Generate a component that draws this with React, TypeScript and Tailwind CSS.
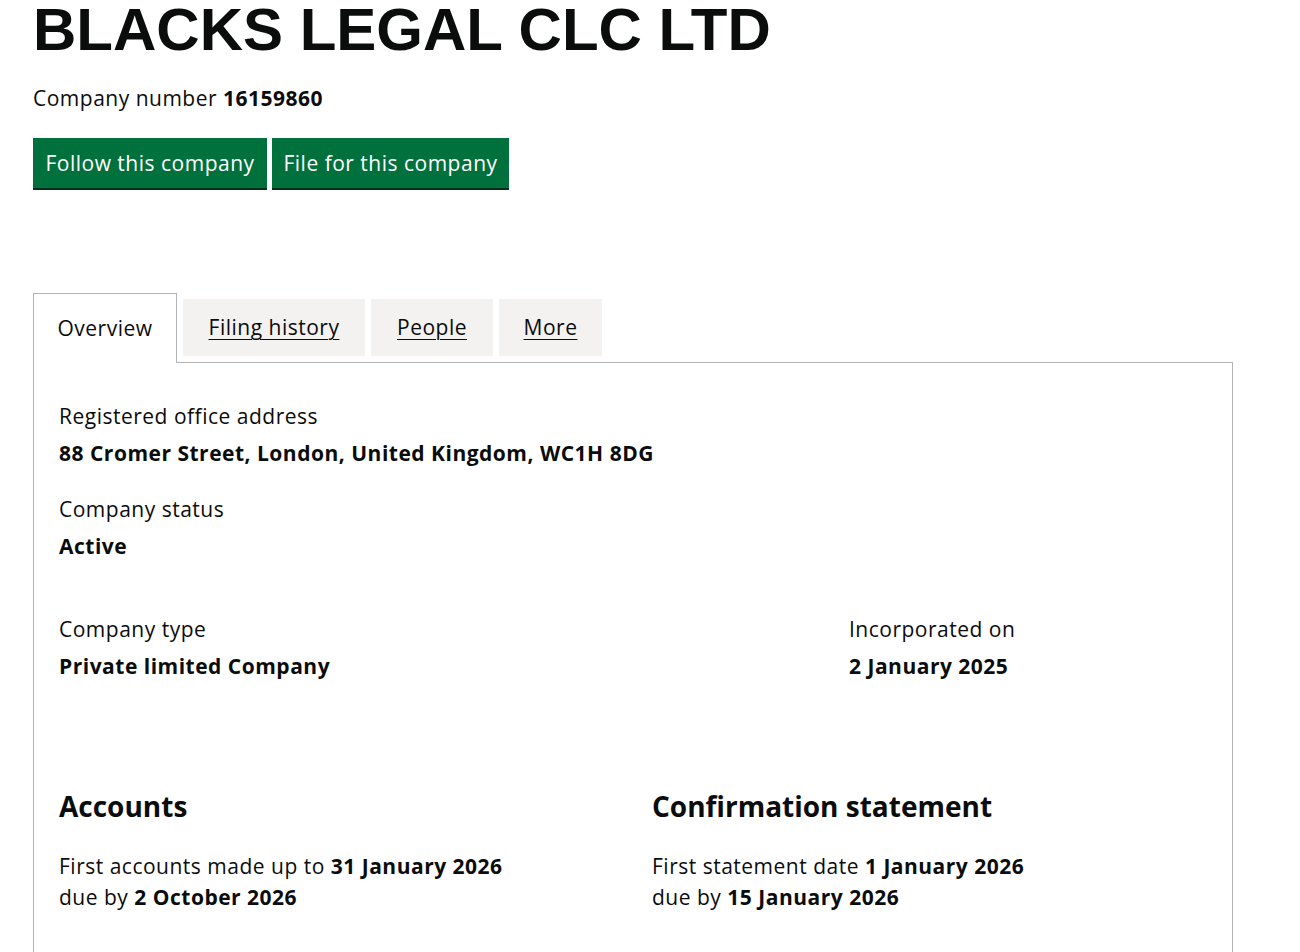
import React from 'react'

const body = "font-['Open_Sans','Liberation_Sans',sans-serif] tracking-[0.5px]"

const tabs = [
  { label: 'Filing history', w: 'w-[182px]' },
  { label: 'People', w: 'w-[122px]' },
  { label: 'More', w: 'w-[103px]' },
]

function Field({ label, value, className = '' }: { label: string; value: string; className?: string }) {
  return (
    <div className={className}>
      <div className="text-[21px] leading-[25px]">{label}</div>
      <div className="mt-[12px] text-[21px] leading-[25px] font-bold">{value}</div>
    </div>
  )
}

export default function App() {
  return (
    <div className={`${body} text-[#0b0c0c] bg-white min-h-[952px] overflow-hidden`}>
      <div className="pl-[33px] w-[1233px]">
        <h1 className="font-['Liberation_Sans',Arial,sans-serif] font-bold text-[60px] leading-[60px] tracking-normal">
          BLACKS LEGAL CLC LTD
        </h1>

        <p className="mt-[26px] text-[21px] leading-[25px]">
          Company number <strong className="font-bold">16159860</strong>
        </p>

        {/* Actions */}
        <div className="mt-[27px] flex gap-[5px]">
          <button className="w-[234px] h-[50px] bg-[#00703c] text-white text-[21px] leading-[25px] shadow-[0_2px_0_#002d18]">
            Follow this company
          </button>
          <button className="w-[237px] h-[50px] bg-[#00703c] text-white text-[21px] leading-[25px] shadow-[0_2px_0_#002d18]">
            File for this company
          </button>
        </div>

        {/* Tabs */}
        <div className="mt-[105px] flex items-start gap-[6px] relative z-10">
          <div className="w-[144px] h-[70px] -mb-[1px] border border-b-0 border-[#b1b4b6] bg-white flex items-center justify-center text-[21px] leading-[25px]">
            Overview
          </div>
          {tabs.map(t => (
            <a
              key={t.label}
              href="#"
              className={`${t.w} h-[57px] mt-[6px] bg-[#f3f2f1] flex items-center justify-center text-[21px] leading-[25px] underline underline-offset-[4px] decoration-1`}
            >
              {t.label}
            </a>
          ))}
        </div>

        {/* Panel */}
        <div className="border border-[#b1b4b6] pl-[25px] pt-[41px] pb-[60px]">
          <Field label="Registered office address" value="88 Cromer Street, London, United Kingdom, WC1H 8DG" />
          <Field className="mt-[31px]" label="Company status" value="Active" />

          <div className="mt-[58px] grid grid-cols-[790px_1fr]">
            <Field label="Company type" value="Private limited Company" />
            <Field label="Incorporated on" value="2 January 2025" />
          </div>

          <div className="mt-[112px] grid grid-cols-[593px_1fr]">
            <div>
              <h2 className="text-[28px] leading-[30px] font-bold tracking-normal">Accounts</h2>
              <p className="mt-[30px] text-[21px] leading-[31px]">
                First accounts made up to <strong>31 January 2026</strong>
                <br />
                due by <strong>2 October 2026</strong>
              </p>
            </div>
            <div>
              <h2 className="text-[28px] leading-[30px] font-bold tracking-normal">Confirmation statement</h2>
              <p className="mt-[30px] text-[21px] leading-[31px]">
                First statement date <strong>1 January 2026</strong>
                <br />
                due by <strong>15 January 2026</strong>
              </p>
            </div>
          </div>
        </div>
      </div>
    </div>
  )
}
